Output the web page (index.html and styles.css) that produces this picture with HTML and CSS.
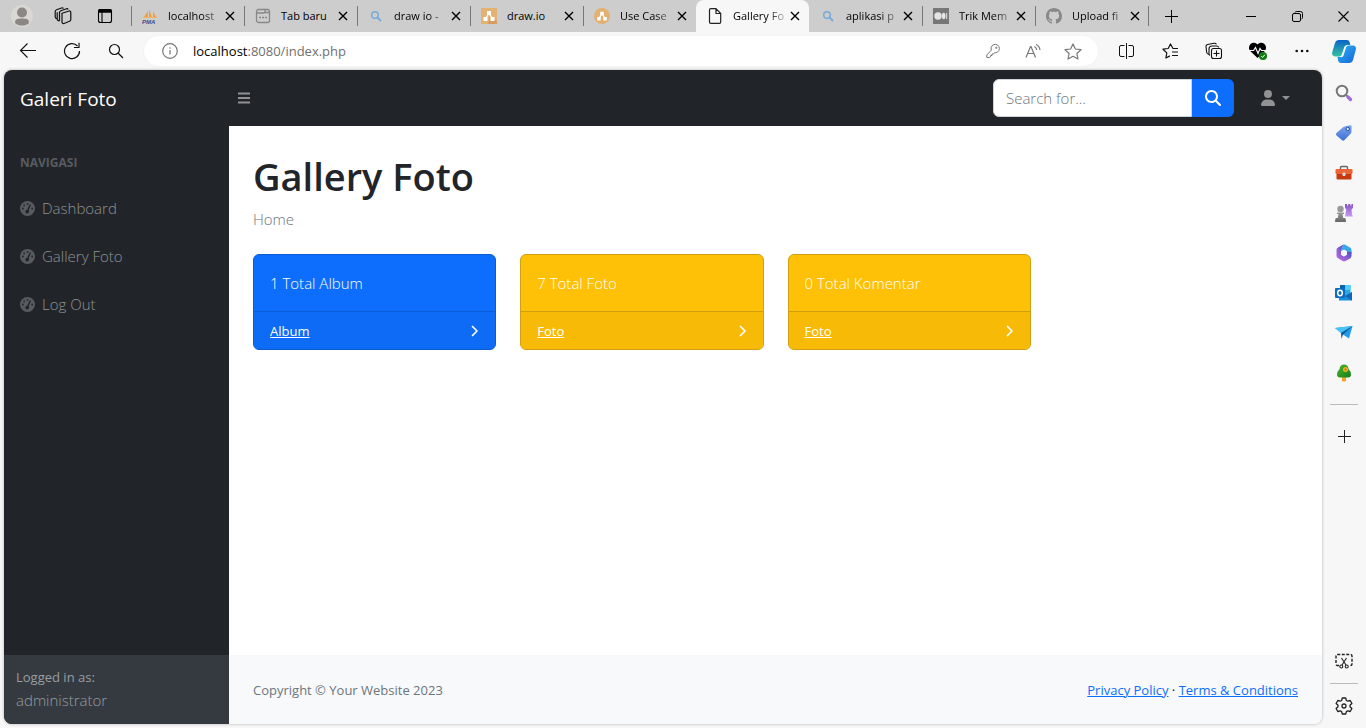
FILE: index.html
```html
<!DOCTYPE html>
<html lang="id">
<head>
<meta charset="utf-8">
<meta name="viewport" content="width=device-width, initial-scale=1">
<title>Gallery Foto</title>
<link rel="stylesheet" href="styles.css">
</head>
<body>
<svg class="defs" aria-hidden="true">
  <defs>
    <linearGradient id="g-blue" x1="0" y1="0" x2="0" y2="1"><stop offset="0" stop-color="#0a62c9"/><stop offset="1" stop-color="#35c3a0"/></linearGradient>
    <linearGradient id="g-sky" x1="0" y1="0" x2="1" y2="1"><stop offset="0" stop-color="#2bb7f5"/><stop offset="1" stop-color="#1763d6"/></linearGradient>
    <linearGradient id="g-tag" x1="0" y1="0" x2="0" y2="1"><stop offset="0" stop-color="#7ea6ee"/><stop offset="1" stop-color="#3d6fd6"/></linearGradient>
    <linearGradient id="g-365" x1="0" y1="1" x2="1" y2="0"><stop offset="0" stop-color="#c06fe0"/><stop offset="1" stop-color="#4a4cc4"/></linearGradient>
    <linearGradient id="g-rook" x1="0" y1="0" x2="0" y2="1"><stop offset="0" stop-color="#8b52c8"/><stop offset="1" stop-color="#c49cf0"/></linearGradient>
    <linearGradient id="g-pawn" x1="0" y1="0" x2="0" y2="1"><stop offset="0" stop-color="#9a9a9a"/><stop offset="1" stop-color="#666"/></linearGradient>
    <linearGradient id="g-tree" x1="0" y1="0" x2="1" y2="1"><stop offset="0" stop-color="#4fb52a"/><stop offset="1" stop-color="#157f1c"/></linearGradient>
    <symbol id="i-x" viewBox="0 0 10 10"><path d="M1 1l8 8M9 1l-8 8" fill="none" stroke="currentColor" stroke-width="1.400"/></symbol>
    <symbol id="i-find" viewBox="0 0 16 16"><circle cx="7" cy="7" r="3.300" fill="none" stroke="#78aad8" stroke-width="1.500"/><path d="M9.500 9.500l3 3" stroke="#78aad8" stroke-width="1.800" stroke-linecap="round"/></symbol>
    <symbol id="i-nodes" viewBox="0 0 16 16"><path d="M8 5L4.500 11M8 5l3.500 6" stroke="#fff" stroke-width="1.300"/><path d="M6 3h4v4H6zM2.500 9h4v4h-4zM9.500 9h4v4h-4z" fill="#fff"/></symbol>
    <symbol id="i-gauge" viewBox="0 0 16 16"><circle cx="8" cy="8" r="8" fill="currentColor"/><g fill="#212529"><circle cx="8" cy="3" r="1"/><circle cx="4.400" cy="4.600" r="1"/><circle cx="3" cy="8" r="1"/><circle cx="13" cy="8" r="1"/><circle cx="7.700" cy="11.200" r="2"/></g><path d="M8 10.500l2.800-6.300" stroke="#212529" stroke-width="1.500" stroke-linecap="round"/></symbol>
    <symbol id="i-chev" viewBox="0 0 8 12"><path d="M1.500 1.500L6 6l-4.500 4.500" fill="none" stroke="currentColor" stroke-width="1.700" stroke-linecap="round" stroke-linejoin="round"/></symbol>
    <symbol id="i-plus" viewBox="0 0 13 13"><path d="M6.500 0v13M0 6.500h13" stroke="currentColor"/></symbol>
  </defs>
</svg>

<header class="tabstrip">
  <div class="strip-tools">
    <button class="strip-btn" aria-label="Profil"><svg width="22" height="22" viewBox="0 0 22 22"><circle cx="11" cy="11" r="11" fill="#dad8d5"/><circle cx="11" cy="7.500" r="5" fill="#8a8784"/><path d="M4 18c0-4 2.500-4.500 7-4.500s7 .5 7 4.500c-2 2-4.500 2.600-7 2.600S6 20 4 18z" fill="#8a8784"/></svg></button>
    <button class="strip-btn" aria-label="Ruang kerja"><svg width="18" height="18" viewBox="0 0 18 18" fill="none" stroke="#111" stroke-width="1.200" stroke-linejoin="round"><path d="M8 6.300l7-2.300a1.500 1.500 0 0 1 1.800 1.400v7a2 2 0 0 1-1.300 1.900L10 16.500A1.500 1.500 0 0 1 8 15zM5.500 13.800V5.500a2 2 0 0 1 1.300-1.800L12.500 1.800q1.200-.3 1.700.7M3.200 11.800q-2-.4-2-1.800V4.600a2 2 0 0 1 1.300-1.800L7.500 1q1.300-.4 2 .5M5.500 13.800q-2.300 0-2.300-2V5.200"/></svg></button>
    <button class="strip-btn" aria-label="Menu tab"><svg width="16" height="16" viewBox="0 0 16 16" fill="none" stroke="#000" stroke-width="1.100"><rect x="1.500" y="1.500" width="13" height="13" rx="2"/><path d="M1.500 3h13" stroke-width="3.500"/><path d="M5 4v10"/></svg></button>
  </div>
  <nav class="tabs" aria-label="Tab">
    <div class="tab"><svg class="fav" viewBox="0 0 16 16"><path d="M2 9L6 3v6zM7 9V1l3 8zM11 9V3l3 6z" fill="#f0a03c"/><path d="M1 9.500h14" stroke="#f3b25e"/><text x="0" y="15.500" class="pma">PMA</text></svg><span class="tab-title fade">localhost</span><button class="close" aria-label="Tutup"><svg><use href="#i-x"/></svg></button></div>
    <div class="tab"><svg class="fav" viewBox="0 0 16 16" fill="none" stroke="#888" stroke-width="1.300"><rect x="1.500" y="1.500" width="13" height="13" rx="2"/><path d="M1.500 5H9l1-1.500V1.500M10 4.500h4.500"/><path d="M4 9.500h2M7 9.500h2M10 9.500h2" stroke-width="1.600"/></svg><span class="tab-title">Tab baru</span><button class="close" aria-label="Tutup"><svg><use href="#i-x"/></svg></button></div>
    <div class="tab"><svg class="fav"><use href="#i-find"/></svg><span class="tab-title fade">draw io -</span><button class="close" aria-label="Tutup"><svg><use href="#i-x"/></svg></button></div>
    <div class="tab"><svg class="fav" viewBox="0 0 16 16"><path d="M0 0h16v16H0z" fill="#e3b273"/><path d="M9 8l7 5v3H7z" fill="#d69a62"/><use href="#i-nodes"/></svg><span class="tab-title">draw.io</span><button class="close" aria-label="Tutup"><svg><use href="#i-x"/></svg></button></div>
    <div class="tab"><svg class="fav" viewBox="0 0 16 16"><circle cx="8" cy="8" r="8" fill="#e2b071"/><use href="#i-nodes" x="1" y="1" width="14" height="14"/></svg><span class="tab-title fade">Use Case</span><button class="close" aria-label="Tutup"><svg><use href="#i-x"/></svg></button></div>
    <div class="tab active"><svg class="fav" viewBox="0 0 16 16" fill="none" stroke="#222" stroke-width="1.200" stroke-linejoin="round"><path d="M2.500 2q0-1.300 1.300-1.300H9l4.700 4.800V14q0 1.300-1.300 1.300H3.800Q2.500 15.300 2.500 14zM9 .7v4.800h4.700"/></svg><span class="tab-title fade">Gallery Fo</span><button class="close" aria-label="Tutup"><svg><use href="#i-x"/></svg></button></div>
    <div class="tab plain"><svg class="fav"><use href="#i-find"/></svg><span class="tab-title fade">aplikasi p</span><button class="close" aria-label="Tutup"><svg><use href="#i-x"/></svg></button></div>
    <div class="tab"><svg class="fav" viewBox="0 0 16 16"><path d="M0 0h16v16H0z" fill="#777"/><circle cx="5" cy="8" r="3.700" fill="#e4e4e4"/><ellipse cx="10.700" cy="8" rx="1.800" ry="3.300" fill="#e4e4e4"/><path d="M13.700 5v6" stroke="#e4e4e4"/></svg><span class="tab-title fade">Trik Mem</span><button class="close" aria-label="Tutup"><svg><use href="#i-x"/></svg></button></div>
    <div class="tab last"><svg class="fav" viewBox="0 0 16 16"><path fill="#888" d="M8 0C3.580 0 0 3.580 0 8c0 3.540 2.290 6.530 5.470 7.590.4.070.55-.17.55-.38 0-.19-.01-.82-.01-1.490-2.010.37-2.530-.49-2.690-.94-.09-.23-.48-.94-.82-1.130-.28-.15-.68-.52-.01-.53.63-.01 1.080.58 1.230.82.72 1.210 1.870.87 2.330.66.070-.52.28-.87.51-1.070-1.780-.2-3.640-.89-3.640-3.950 0-.87.310-1.590.82-2.150-.08-.2-.36-1.020.08-2.120 0 0 .67-.21 2.200.82.64-.18 1.320-.27 2-.27s1.360.09 2 .27c1.530-1.040 2.200-.82 2.200-.82.44 1.100.16 1.920.08 2.120.51.56.82 1.270.82 2.150 0 3.070-1.870 3.750-3.650 3.950.29.25.54.73.54 1.480 0 1.070-.01 1.930-.01 2.200 0 .21.15.46.55.38A8.010 8.010 0 0 0 16 8c0-4.420-3.580-8-8-8z"/></svg><span class="tab-title fade">Upload fi</span><button class="close" aria-label="Tutup"><svg><use href="#i-x"/></svg></button></div>
    <button class="newtab" aria-label="Tab baru"><svg width="13" height="13"><use href="#i-plus"/></svg></button>
  </nav>
  <div class="winctl">
    <button aria-label="Kecilkan"><svg width="11" height="11" viewBox="0 0 11 11"><path d="M0 5.500h10" stroke="#000"/></svg></button>
    <button aria-label="Pulihkan"><svg width="11" height="11" viewBox="0 0 11 11" fill="none" stroke="#000"><rect x=".5" y="2.500" width="8" height="8" rx="1.500"/><path d="M3 1.500q.3-1 1.500-1H8.500q2 0 2 2V6.500q0 1.200-1 1.500"/></svg></button>
    <button aria-label="Tutup jendela"><svg width="11" height="11" viewBox="0 0 11 11"><path d="M.5.5l10 10M10.500.5l-10 10" stroke="#000" stroke-width="1.100"/></svg></button>
  </div>
</header>

<div class="toolbar">
  <button class="tool" aria-label="Kembali"><svg width="18" height="16" viewBox="0 0 18 16" fill="none" stroke="#111" stroke-width="1.100"><path d="M17 7.500H1.500M8.500 .5L1.500 7.500l7 7"/></svg></button>
  <button class="tool" aria-label="Muat ulang"><svg width="18" height="18" viewBox="0 0 18 18" fill="none" stroke="#111" stroke-width="1.200"><path d="M16.500 9A7.500 7.500 0 1 1 14.500 4M11 5.500h5V.8"/></svg></button>
  <button class="tool" aria-label="Cari"><svg width="16" height="16" viewBox="0 0 16 16" fill="none" stroke="#111" stroke-width="1.200"><circle cx="6.500" cy="6.500" r="5"/><path d="M10 10l5 5"/></svg></button>
  <div class="address">
    <svg class="info" width="16" height="16" viewBox="0 0 16 16" fill="none" stroke="#777" stroke-width="1.200"><circle cx="8" cy="8" r="7.300"/><path d="M8 7v4.500M8 4.300v1.400"/></svg>
    <span class="url"><b>localhost</b>:8080/index.php</span>
    <button class="in" aria-label="Kata sandi"><svg width="14" height="14" viewBox="0 0 14 14" fill="none" stroke="#777"><path d="M6 1.800A4.200 4.200 0 1 1 9.500 8.700L8.500 8.600 7.500 10H6v1.500H4.500V13l-.7.500H.8V11L5.300 6.200Q4.500 3.500 6 1.800z"/><circle cx="10.300" cy="3.800" r=".7"/></svg></button>
    <button class="in" aria-label="Baca"><svg width="16" height="14" viewBox="0 0 16 14" fill="none" stroke="#777" stroke-width="1.200"><path d="M1 13.500L5.500 2.500h.5l4.500 11M2.500 9.500h6.500M9.500 2.500q2 1.200 2.200 3.500M11 .5q3.500 1.500 4 5.500"/></svg></button>
    <button class="in" aria-label="Favorit"><svg width="18" height="17" viewBox="0 0 18 17" fill="none" stroke="#777" stroke-width="1.200" stroke-linejoin="round"><path d="M9 1l2.400 5 5.600.7-4.100 3.800 1.100 5.500L9 13.300 4 16l1.100-5.500L1 6.700 6.600 6z"/></svg></button>
  </div>
  <button class="tool" aria-label="Layar terpisah"><svg width="15" height="16" viewBox="0 0 15 16" fill="none" stroke="#111"><path d="M7.500 0v16M5.500 2.500H2q-1.500 0-1.500 1.500v8q0 1.500 1.500 1.500h3.500M9.500 2.500H13q1.500 0 1.500 1.500v8q0 1.500-1.500 1.500H9.500"/></svg></button>
  <button class="tool" aria-label="Daftar favorit"><svg width="17" height="16" viewBox="0 0 17 16" fill="none" stroke="#111" stroke-width="1.200" stroke-linejoin="round"><path d="M16 5.500h-5L8.500 1 6.200 5.500 1 6.200l3.800 3.700-.9 5.100 4-2.100M10 9h6M10 12.500h6"/></svg></button>
  <button class="tool" aria-label="Koleksi"><svg width="18" height="18" viewBox="0 0 18 18" fill="none" stroke="#111" stroke-width="1.100"><rect x="6.500" y="6.500" width="10" height="10" rx="2"/><path d="M11.500 8.500v6M8.500 11.500h6M4 12.500Q2 12 1.700 10.500L1 4.500Q1 2.800 2.500 2.500L9 1.300q2-.2 2.400 1M5 13.500q-1-.5-1-2V7q0-3 3-3h4.500q2 0 2.200 1.500"/></svg></button>
  <button class="tool" aria-label="Performa"><svg width="18" height="18" viewBox="0 0 18 18"><path d="M8.500 16L1.200 9a4.500 4.500 0 0 1 7.300-6.500A4.500 4.500 0 0 1 15.800 9z" fill="#000"/><path d="M0 8.500h4.500l2-3 2.500 6 2-5 1.500 2H17" stroke="#f7f7f7" stroke-width="1.200" fill="none"/><circle cx="14" cy="14" r="4" fill="#107c10"/><path d="M12.300 14.200l1.200 1.200 2.400-2.700" stroke="#fff" fill="none"/></svg></button>
  <button class="tool" aria-label="Lainnya"><svg width="14" height="4" viewBox="0 0 14 4" fill="#111"><circle cx="1.700" cy="2" r="1.300"/><circle cx="7" cy="2" r="1.300"/><circle cx="12.300" cy="2" r="1.300"/></svg></button>
  <button class="tool copilot" aria-label="Copilot"><svg width="24" height="23" viewBox="0 0 24 23"><path d="M7 0h8q2 0 2.600 2l.7 3h-3q-2.300 0-3 2.300L10 14q-.7 2.500-3 2.500H3Q-.8 16 .3 12L3 3Q4 0 7 0z" fill="url(#g-blue)"/><path d="M17 23H9q-2.300 0-2.800-2L5.500 17h2.800q2.500 0 3.200-2.500L13.500 8q.8-2.500 3-2.500H21q3.800.5 2.700 4.500L21 20q-1 3-4 3z" fill="url(#g-sky)"/><path d="M12.300 7.300Q13 6 14.500 6L11.300 16Q10.500 17.500 8.800 17q1-1 1.300-2.500z" fill="#f7f7f7"/></svg></button>
</div>

<div class="workspace">
  <div class="page">
    <header class="topnav">
      <a class="brand" href="#">Galeri Foto</a>
      <button class="toggle" aria-label="Menu"><svg width="12" height="12" viewBox="0 0 12 12" stroke="currentColor" stroke-width="1.800"><path d="M0 1.500h12M0 6h12M0 10.500h12"/></svg></button>
      <form class="search">
        <input type="text" placeholder="Search for..." aria-label="Search for...">
        <button type="button" aria-label="Search"><svg width="16" height="16" viewBox="0 0 512 512"><path fill="#fff" d="M416 208c0 45.900-14.900 88.300-40 122.700L502.600 457.400c12.500 12.500 12.500 32.800 0 45.300s-32.800 12.500-45.300 0L330.700 376c-34.400 25.200-76.800 40-122.700 40C93.100 416 0 322.900 0 208S93.100 0 208 0S416 93.100 416 208zM208 352a144 144 0 1 0 0-288 144 144 0 1 0 0 288z"/></svg></button>
      </form>
      <button class="user" aria-label="Akun"><svg width="14" height="16" viewBox="0 0 448 512"><path fill="currentColor" d="M224 256A128 128 0 1 0 224 0a128 128 0 1 0 0 256zm-45.700 48C79.800 304 0 383.800 0 482.300C0 498.700 13.300 512 29.700 512H418.300c16.400 0 29.700-13.300 29.700-29.700C448 383.800 368.200 304 269.700 304H178.300z"/></svg><span class="caret"></span></button>
    </header>
    <div class="body">
      <aside class="sidenav">
        <nav>
          <div class="heading">NAVIGASI</div>
          <a href="#"><svg width="15" height="15"><use href="#i-gauge"/></svg>Dashboard</a>
          <a href="#"><svg width="15" height="15"><use href="#i-gauge"/></svg>Gallery Foto</a>
          <a href="#"><svg width="15" height="15"><use href="#i-gauge"/></svg>Log Out</a>
        </nav>
        <div class="logged"><div class="small">Logged in as:</div>administrator</div>
      </aside>
      <div class="content">
        <main>
          <h1>Gallery Foto</h1>
          <div class="crumb">Home</div>
          <div class="cards">
            <section class="card blue"><div class="card-body">1 Total Album</div><div class="card-foot"><a href="#">Album</a><svg width="8" height="12"><use href="#i-chev"/></svg></div></section>
            <section class="card yellow"><div class="card-body">7 Total Foto</div><div class="card-foot"><a href="#">Foto</a><svg width="8" height="12"><use href="#i-chev"/></svg></div></section>
            <section class="card yellow"><div class="card-body">0 Total Komentar</div><div class="card-foot"><a href="#">Foto</a><svg width="8" height="12"><use href="#i-chev"/></svg></div></section>
          </div>
        </main>
        <footer class="foot"><span class="muted">Copyright © Your Website 2023</span><span><a href="#">Privacy Policy</a> · <a href="#">Terms &amp; Conditions</a></span></footer>
      </div>
    </div>
  </div>
  <aside class="rail">
    <button aria-label="Pencarian"><svg width="18" height="18" viewBox="0 0 18 18" fill="none"><circle cx="7" cy="7" r="5.300" stroke="#777" stroke-width="2"/><path d="M11 11l1.500 1.500" stroke="#777" stroke-width="2"/><path d="M13 13l2.500 2.500" stroke="#a06bdc" stroke-width="3.200" stroke-linecap="round"/></svg></button>
    <button aria-label="Belanja"><svg width="18" height="18" viewBox="0 0 18 18"><path d="M9.500 2.500L15 1.300q1.600-.3 1.600 1.300l-.2 5.600q0 .8-.6 1.300L9.500 16q-1.300 1.300-2.600 0L1.500 11.500q-1.300-1.300 0-2.600L8 3.200q.7-.6 1.500-.7z" fill="url(#g-tag)"/><circle cx="12.700" cy="5" r="1.700" fill="#dce8ff" stroke="#27489e"/></svg></button>
    <button aria-label="Alat"><svg width="18" height="16" viewBox="0 0 18 16"><path d="M5.500 5V2.500q0-1 1-1h5q1 0 1 1V5" fill="none" stroke="#666" stroke-width="1.400"/><rect x=".5" y="4" width="17" height="5" rx="1" fill="#ec6336"/><path d="M1.500 9h15v4.500q0 1-1 1h-13q-1 0-1-1z" fill="#c73a10"/><rect x="7.500" y="7.500" width="3" height="3.500" rx="1" fill="#d5e2e8"/></svg></button>
    <button aria-label="Game"><svg width="18" height="18" viewBox="0 0 18 18"><path d="M10 0h2v1.500h1.300V0h2v1.500h1.200V0H18v4l-1.500 1.500.5 5 1 2h-8l1.300-7L10 4z" fill="url(#g-rook)"/><circle cx="5.500" cy="5" r="3.200" fill="#999"/><path d="M2 8.500h7v1.500H7.500l.7 4H10q1 .5 1 4H0q0-3.500 1-4h1.800l.7-4H2z" fill="url(#g-pawn)"/></svg></button>
    <button aria-label="Microsoft 365"><svg width="18" height="18" viewBox="0 0 18 18"><path d="M8.500.5L3 3.600Q1.500 4.500 1.500 6v6q0 1.500 1.500 2.300l2.500 1.200 3.500-3-3-2V7z" fill="url(#g-365)"/><path d="M8.500.5h1.300L15 3.600q1.500.9 1.500 2.400v4L12 7.500 6 7z" fill="#38a8e8"/><path d="M16.500 8v4q0 1.500-1.500 2.400l-5 2.800H8l-4-2.500 8-4.200V7.500z" fill="url(#g-365)"/><path d="M9 5.500l3 1.700v3.600l-3 1.700-3-1.700V7.200z" fill="#f7f7f7"/></svg></button>
    <button aria-label="Outlook"><svg width="18" height="18" viewBox="0 0 18 18"><path d="M5 1h10.500v13H5z" fill="#28a8ea"/><path d="M5 1h5v5H5z" fill="#0a64ad"/><path d="M10 1h5.500v5H10z" fill="#50d0f8"/><path d="M4 8l7 4 6-4v8.500H4z" fill="#1490df"/><path d="M17 8v8.500L10 12z" fill="#1065b8"/><rect x="0" y="4" width="10" height="10" rx="1" fill="#0f6cbd"/><ellipse cx="5" cy="9" rx="2.300" ry="2.700" fill="none" stroke="#fff" stroke-width="1.500"/></svg></button>
    <button aria-label="Drop"><svg width="18" height="14" viewBox="0 0 18 14"><path d="M0 2l17.500-2L14 12.500 8 8.500z" fill="#239be5"/><path d="M0 2l17.500-2L6 7z" fill="#46c3f4"/><path d="M6 7L17.500 0 8 8.500 6.500 13z" fill="#0f579f"/></svg></button>
    <button aria-label="Pohon"><svg width="16" height="18" viewBox="0 0 16 18"><rect x="6" y="11" width="4" height="6.500" rx="1" fill="#f5a524"/><path d="M8 .5q4 0 4.500 4.500Q15 7.500 15 10.500q0 3-3 3H4q-3 0-3-3Q1 7.500 3.500 5 4 .5 8 .5z" fill="url(#g-tree)"/><circle cx="9.500" cy="5.500" r="2.500" fill="#f0b51c"/><circle cx="9.500" cy="5.500" r="1" fill="#d85c13"/></svg></button>
    <hr>
    <button aria-label="Tambah"><svg width="13" height="13"><use href="#i-plus"/></svg></button>
    <span class="spacer"></span>
    <button aria-label="Cuplikan layar"><svg width="18" height="16" viewBox="0 0 18 16" fill="none" stroke="#222" stroke-width="1.400"><path d="M4 12.500H2.500q-1.500 0-1.500-1.500V3q0-1.500 1.500-1.500h13Q17 1.500 17 3v8q0 1.500-1.500 1.500H14" stroke-dasharray="3 1.500"/><path d="M6.500 5l4.500 7M11.500 5l-4.500 7" stroke-width="1.100"/><circle cx="6.300" cy="13.500" r="1.500" stroke-width="1.100"/><circle cx="11.700" cy="13.500" r="1.500" stroke-width="1.100"/></svg></button>
    <hr>
    <button aria-label="Pengaturan"><svg width="18" height="18" viewBox="0 0 18 18" fill="none" stroke="#222" stroke-width="1.300" stroke-linejoin="round"><path d="M7.300 1h3.400l.7 2.500 1.300.7 2.500-.7 1.700 3L15 8.300v1.400l1.900 1.800-1.700 3-2.500-.7-1.300.7-.7 2.500H7.300l-.7-2.500-1.300-.7-2.500.7-1.700-3L3 9.700V8.300L1.100 6.500l1.700-3 2.500.7 1.300-.7z"/><circle cx="9" cy="9" r="2"/></svg></button>
  </aside>
</div>
</body>
</html>
```
FILE: styles.css
```css
* { box-sizing: border-box; }
body {
  margin: 0;
  height: 100vh;
  display: flex;
  flex-direction: column;
  background: #f7f7f7;
  color: #212529;
  font-family: "Open Sans", "Noto Sans", sans-serif;
  font-size: 15px;
  line-height: 24px;
  font-weight: 300;
  overflow: hidden;
}
button {
  border: 0;
  padding: 0;
  background: none;
  color: inherit;
  font: inherit;
  display: flex;
  align-items: center;
  justify-content: center;
}
svg { display: block; flex: none; }
.defs { position: absolute; width: 0; height: 0; }

/* Tab strip */
.tabstrip { display: flex; height: 32px; flex: none; background: #cdcdcd; color: #000; }
.strip-tools { display: flex; padding-left: 2px; width: 131px; }
.strip-btn { width: 40px; }
.strip-btn + .strip-btn { width: 42px; }
.tabs { display: flex; flex: 1; min-width: 0; }
.tab {
  display: flex;
  align-items: center;
  flex: 0 1 113px;
  min-width: 0;
  padding: 0 5px 0 11px;
  font-size: 11px;
  font-weight: 400;
  background: linear-gradient(#777, #777) 0 6px / 1px 20px no-repeat;
}
.tab.active { background: #f7f7f7; border-radius: 8px 8px 0 0; }
.tab.plain { background: none; }
.tab.last { flex-basis: 114px; background: linear-gradient(#777, #777) 0 6px / 1px 20px no-repeat, linear-gradient(#777, #777) 100% 6px / 1px 20px no-repeat; }
.fav { width: 16px; height: 16px; margin-right: 10px; }
.pma { font: italic 700 6px "Liberation Sans", sans-serif; fill: #44488c; }
.tab-title { flex: 1; white-space: nowrap; }
.fade {
  -webkit-mask-image: linear-gradient(90deg, #000 65%, rgba(0, 0, 0, 0.2));
  mask-image: linear-gradient(90deg, #000 65%, rgba(0, 0, 0, 0.2));
}
.close { width: 18px; height: 18px; }
.close svg { width: 10px; height: 10px; }
.newtab { width: 44px; }
.winctl { display: flex; }
.winctl button { width: 46px; }

/* Toolbar */
.toolbar { display: flex; flex: none; height: 38px; padding: 0 2px 0 6px; align-items: center; }
.tool { width: 44px; height: 36px; flex: none; }
.tool.copilot { width: 40px; }
.address {
  flex: 1;
  display: flex;
  align-items: center;
  height: 30px;
  margin: 0 6px;
  padding: 0 5px 0 18px;
  border-radius: 15px;
  background: #fff;
  box-shadow: 0 0 3px #eee;
}
.url { flex: 1; margin-left: 15px; font-size: 13px; font-weight: 400; color: #707070; }
.url b { font-weight: 400; color: #000; }
.in { width: 40px; height: 30px; }

/* Page viewport and side rail */
.workspace { flex: 1; min-height: 0; display: flex; padding-left: 4px; }
.page {
  flex: 1;
  min-width: 0;
  display: flex;
  flex-direction: column;
  margin-bottom: 4px;
  background: #fff;
  border-radius: 8px;
  overflow: hidden;
  box-shadow: 0 0 3px #aaa;
}
.rail { width: 44px; display: flex; flex-direction: column; align-items: center; padding: 3px 0 2px; color: #222; }
.rail button { width: 40px; height: 40px; flex: none; }
.rail hr { width: 28px; margin: 11px 0; border: 0; border-top: 1px solid #bbb; }
.rail .spacer { flex: 1; }
.rail .spacer ~ hr { margin: 2px 0; }

/* Application */
.topnav { display: flex; align-items: center; height: 56px; flex: none; background: #212529; color: #909294; }
.brand { width: 225px; padding: 2px 0 0 16px; font-size: 19px; font-weight: 400; color: #fff; text-decoration: none; }
.toggle { width: 30px; height: 32px; }
.search { display: flex; width: 241px; height: 38px; margin-left: auto; }
.search input {
  flex: 1;
  min-width: 0;
  padding: 0 12px;
  border: 1px solid #ced4da;
  border-radius: 6px 0 0 6px;
  font: inherit;
  color: #212529;
}
.search input::placeholder { color: #6c757d; opacity: 1; }
.search button { width: 42px; border-radius: 0 6px 6px 0; background: #0d6efd; }
.user { gap: 7px; height: 40px; margin: 0 32px 0 27px; }
.caret { border: 4px solid transparent; border-top-color: currentColor; border-bottom: 0; }
.body { flex: 1; min-height: 0; display: flex; }
.sidenav { width: 225px; flex: none; display: flex; flex-direction: column; background: #212529; color: #909294; }
.sidenav nav { flex: 1; }
.heading { padding: 27px 16px 11px; font-size: 12px; line-height: 20px; font-weight: 700; color: #585b5f; }
.sidenav a { display: flex; align-items: center; gap: 7px; height: 48px; padding: 0 16px; color: #909294; text-decoration: none; }
.sidenav a svg { color: #585b5f; }
.logged { padding: 12px; background: #343a40; line-height: 24px; color: #9a9da0; }
.small { font-size: 13px; line-height: 21px; font-weight: 400; }
.content { flex: 1; min-width: 0; display: flex; flex-direction: column; }
main { flex: 1; padding: 0 24px; }
h1 { margin: 26px 0 8px; font-size: 38px; line-height: 48px; font-weight: 600; }
.crumb { margin-bottom: 24px; line-height: 22px; color: #6c757d; }
.cards { display: grid; grid-template-columns: repeat(4, 1fr); gap: 24px; }
.card { border: 1px solid; border-radius: 6px; overflow: hidden; color: #fff; }
.card-body { padding: 16px; }
.card-foot {
  display: flex;
  align-items: center;
  justify-content: space-between;
  height: 38px;
  padding: 0 16px;
  border-top: 1px solid;
  font-size: 13px;
  font-weight: 400;
}
.card-foot a { color: #fff; }
.blue { background: #0d6efd; border-color: #0b5cd2; }
.blue .card-foot { background: #0d6bf6; border-color: #0b5cd2; }
.yellow { background: #ffc107; border-color: #d0a010; }
.yellow .card-foot { background: #f7bb07; border-color: #d0a010; }
.foot {
  display: flex;
  align-items: center;
  justify-content: space-between;
  height: 69px;
  padding: 0 24px;
  background: #f8f9fa;
  font-size: 13px;
  font-weight: 400;
}
.muted { color: #6c757d; }
.foot a { color: #0d6efd; }
```
